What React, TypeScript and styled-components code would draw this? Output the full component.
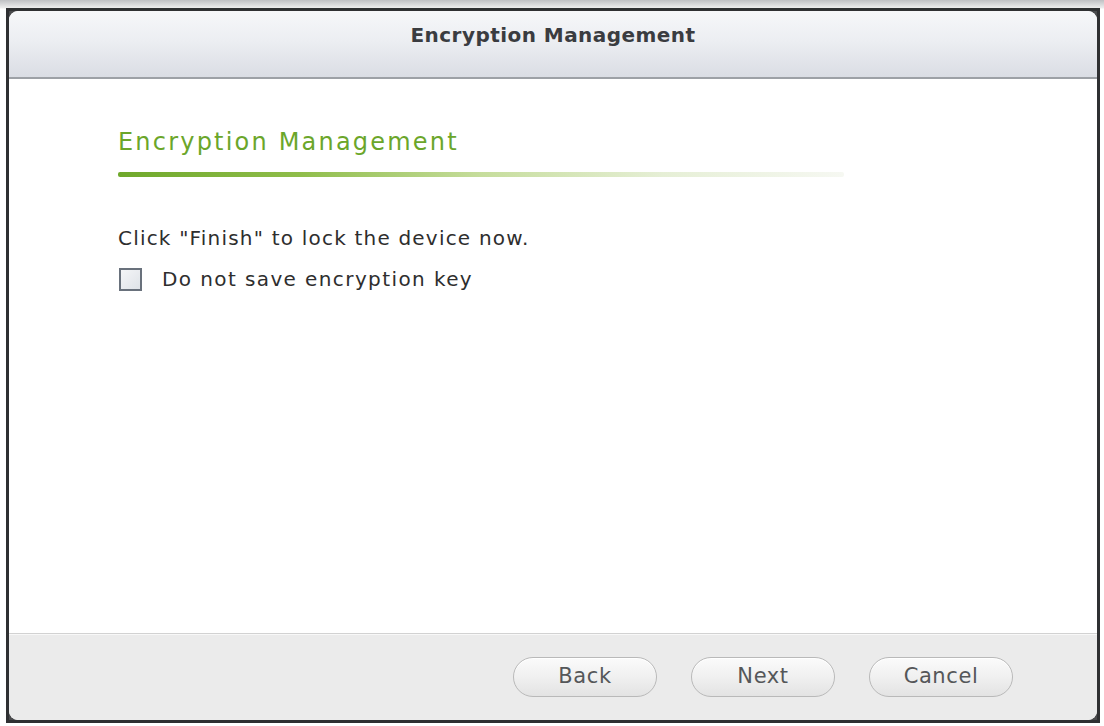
import React from "react";
import styled, { createGlobalStyle } from "styled-components";

const GlobalStyle = createGlobalStyle`
  html, body {
    margin: 0;
    padding: 0;
    background: #ffffff;
  }
  #root {
    width: 1104px;
    height: 726px;
  }
`;

const Stage = styled.div`
  box-sizing: border-box;
  width: 1104px;
  height: 726px;
  padding: 8px 4px 3px 6px;
  background: linear-gradient(to bottom, #bfc0c3 0, #eeeeee 8px, #ffffff 9px);
`;

const Window = styled.div`
  box-sizing: border-box;
  height: 100%;
  border: 3px solid #2f3032;
  background: #4a4b4d;
  display: flex;
  flex-direction: column;
`;

const Panel = styled.div`
  flex: 1;
  display: flex;
  flex-direction: column;
  border-radius: 9px;
  overflow: hidden;
  background: #ffffff;
`;

const TitleBar = styled.div`
  height: 66px;
  flex: none;
  display: flex;
  align-items: center;
  justify-content: center;
  background: linear-gradient(to bottom, #f6f7f9 0%, #eceef2 45%, #dadde4 100%);
  border-bottom: 2px solid #9da1a6;
`;

const TitleText = styled.h1`
  margin: 0;
  padding-bottom: 18px;
  font-family: "DejaVu Sans", sans-serif;
  font-weight: bold;
  font-size: 20px;
  letter-spacing: 0.45px;
  color: #3a3c40;
`;

const Body = styled.div`
  flex: 1;
  padding: 49px 0 0 109px;
  display: flex;
  flex-direction: column;
`;

const SectionTitle = styled.h2`
  margin: 0;
  font-family: "DejaVu Sans", Verdana, sans-serif;
  font-weight: normal;
  font-size: 24px;
  letter-spacing: 2.2px;
  color: #6ba62a;
  line-height: 28px;
`;

const SectionRule = styled.div`
  width: 726px;
  height: 5px;
  margin-top: 16px;
  border-radius: 2px;
  background: linear-gradient(
    to right,
    #6fa82b 0%,
    #8fbd4a 25%,
    #c6dd9c 50%,
    #e6efd6 75%,
    #f6f8f2 100%
  );
`;

const Paragraph = styled.p`
  margin: 49px 0 0 0;
  font-family: "DejaVu Sans", Verdana, sans-serif;
  font-size: 20px;
  letter-spacing: 1.2px;
  line-height: 24px;
  color: #2e2e2e;
`;

const CheckRow = styled.label`
  margin-top: 17px;
  display: flex;
  align-items: center;
  gap: 20px;
  font-family: "DejaVu Sans", Verdana, sans-serif;
  font-size: 20px;
  letter-spacing: 1.4px;
  line-height: 24px;
  color: #2e2e2e;
`;

const CheckBox = styled.span`
  box-sizing: border-box;
  width: 23px;
  height: 23px;
  margin-left: 1px;
  border: 2px solid #69717c;
  background: linear-gradient(135deg, #f4f5f7 0%, #dfe3e8 100%);
`;

const Footer = styled.div`
  height: 86px;
  flex: none;
  display: flex;
  align-items: center;
  justify-content: flex-end;
  gap: 34px;
  padding-right: 84px;
  background: #ebebeb;
  border-top: 1px solid #d2d2d2;
  box-shadow: inset 0 1px 0 #f8f8f8;
`;

const Button = styled.button`
  box-sizing: border-box;
  width: 144px;
  height: 40px;
  border-radius: 20px;
  border: 1px solid #b9b9b9;
  background: linear-gradient(to bottom, #fbfbfb 0%, #f0f0f0 50%, #e3e3e3 100%);
  box-shadow: inset 0 1px 0 #ffffff;
  font-family: "DejaVu Sans", sans-serif;
  font-size: 21px;
  letter-spacing: 0.6px;
  color: #555759;
  padding: 0 0 2px 0;
`;

export default function App() {
  return (
    <>
      <GlobalStyle />
      <Stage>
        <Window>
          <Panel>
            <TitleBar>
              <TitleText>Encryption Management</TitleText>
            </TitleBar>
            <Body>
              <SectionTitle>Encryption Management</SectionTitle>
              <SectionRule />
              <Paragraph>Click "Finish" to lock the device now.</Paragraph>
              <CheckRow>
                <CheckBox />
                Do not save encryption key
              </CheckRow>
            </Body>
            <Footer>
              <Button>Back</Button>
              <Button>Next</Button>
              <Button>Cancel</Button>
            </Footer>
          </Panel>
        </Window>
      </Stage>
    </>
  );
}
